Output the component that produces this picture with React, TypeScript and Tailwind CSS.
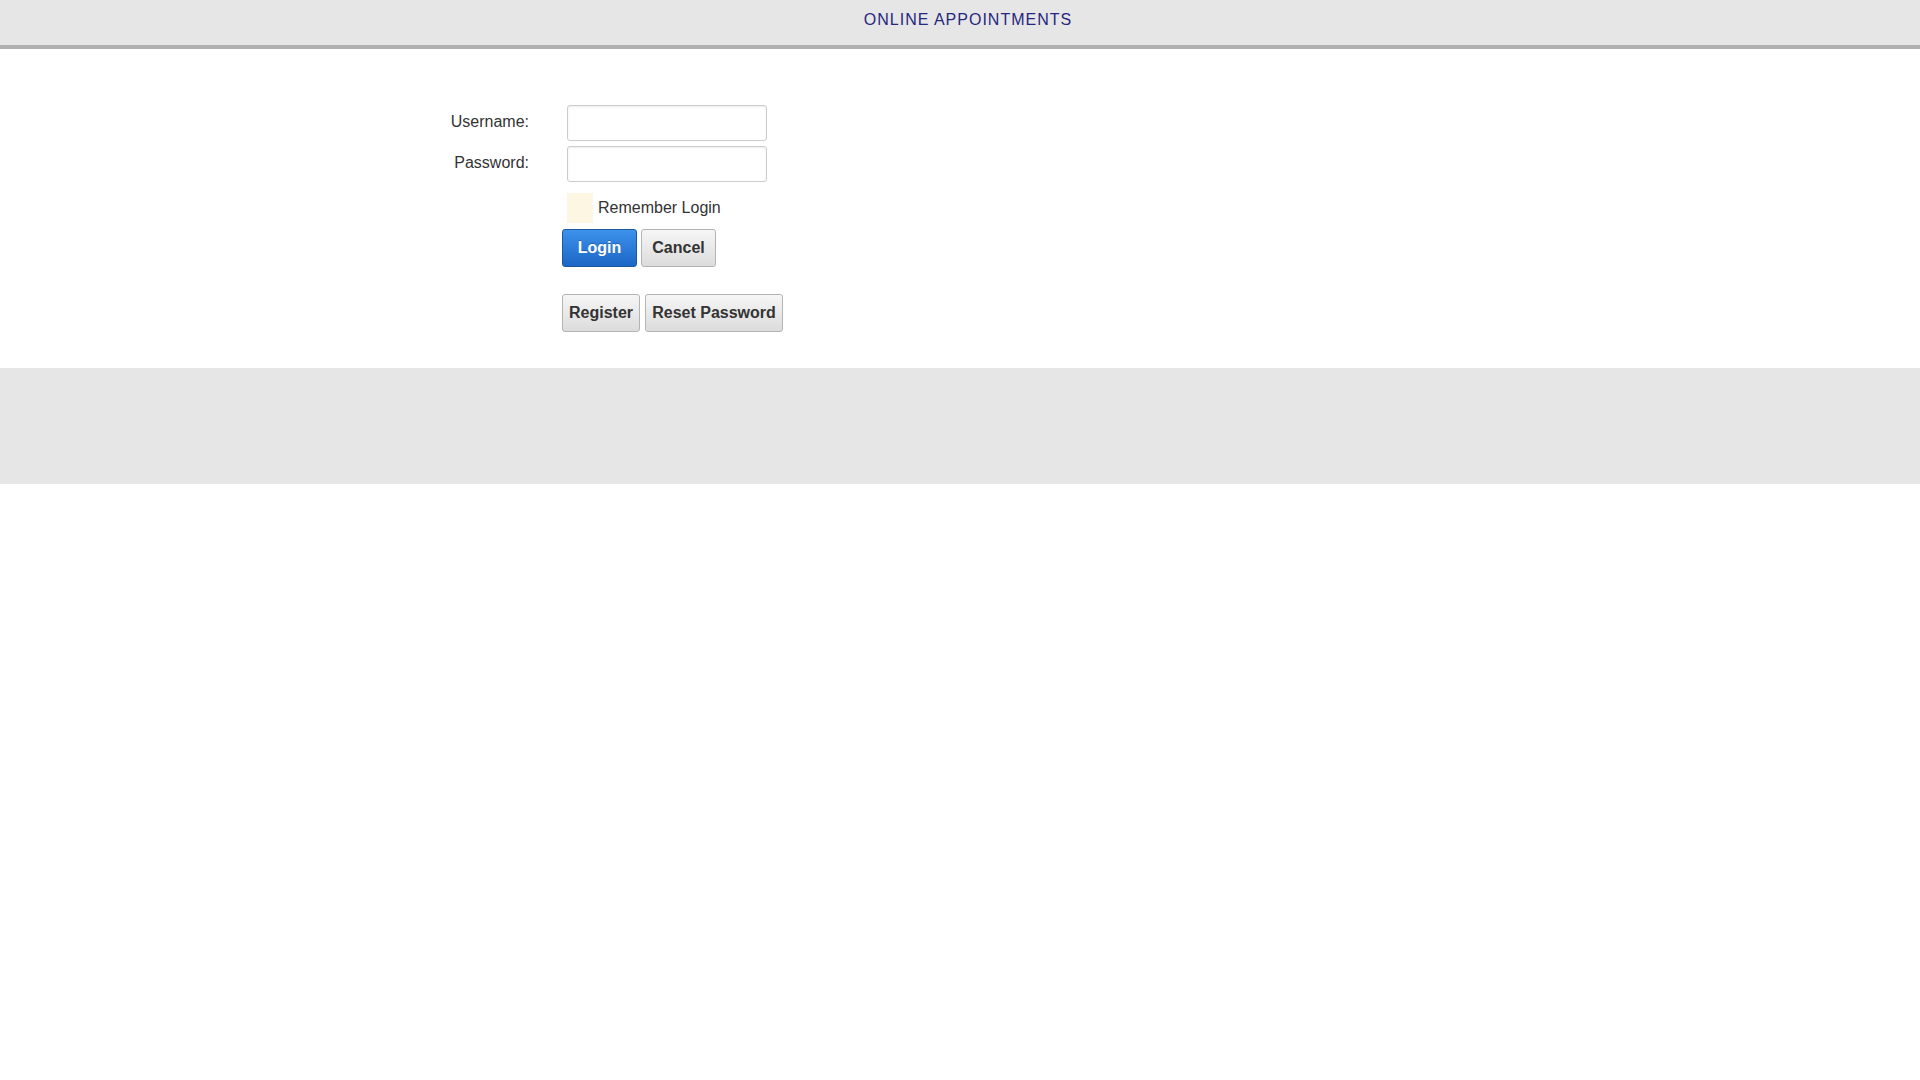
export default function App() {
  return (
    <div className="min-h-screen bg-white font-['Liberation_Sans',Arial,sans-serif] text-[16px] text-[#333]">
      <header className="h-[49px] bg-[#e6e6e6] border-b-4 border-[#b0b0b0] flex items-start justify-center pt-[12px] pl-4">
        <h1 className="text-[16px] font-normal tracking-[1px] text-[#27277f] leading-none">ONLINE APPOINTMENTS</h1>
      </header>

      <main className="pt-[56px] pb-[36px]">
        <form className="ml-[409px] flex flex-col" onSubmit={(e) => e.preventDefault()}>
          <div className="flex items-center h-[36px]">
            <label className="w-[120px] text-right -mt-[2px]">Username:</label>
            <input
              type="text"
              className="ml-[38px] w-[200px] h-[36px] rounded-[3px] border border-[#cccccc] bg-white shadow-[inset_0_1px_2px_rgba(0,0,0,0.08)] px-2 outline-none"
            />
          </div>
          <div className="flex items-center h-[36px] mt-[5px]">
            <label className="w-[120px] text-right -mt-[2px]">Password:</label>
            <input
              type="password"
              className="ml-[38px] w-[200px] h-[36px] rounded-[3px] border border-[#cccccc] bg-white shadow-[inset_0_1px_2px_rgba(0,0,0,0.08)] px-2 outline-none"
            />
          </div>
          <div className="flex items-center h-[30px] mt-[11px] ml-[158px]">
            <span className="w-[26px] h-[30px] bg-[#fdf6e3]" />
            <span className="ml-[5px]">Remember Login</span>
          </div>
          <div className="flex mt-[6px] ml-[153px] gap-[4px]">
            <button
              type="submit"
              className="w-[75px] h-[38px] rounded-[3px] border border-[#1b56a3] bg-gradient-to-b from-[#3d92ea] to-[#1c66c6] text-white font-bold [text-shadow:0_-1px_0_rgba(0,0,0,0.25)]"
            >
              Login
            </button>
            <button
              type="button"
              className="w-[75px] h-[38px] rounded-[3px] border border-[#b3b3b3] bg-gradient-to-b from-[#f6f6f6] to-[#dcdcdc] text-[#333] font-bold"
            >
              Cancel
            </button>
          </div>
          <div className="flex mt-[27px] ml-[153px] gap-[5px]">
            <button
              type="button"
              className="w-[78px] h-[38px] rounded-[3px] border border-[#b3b3b3] bg-gradient-to-b from-[#f6f6f6] to-[#dcdcdc] text-[#333] font-bold"
            >
              Register
            </button>
            <button
              type="button"
              className="w-[138px] h-[38px] rounded-[3px] border border-[#b3b3b3] bg-gradient-to-b from-[#f6f6f6] to-[#dcdcdc] text-[#333] font-bold"
            >
              Reset Password
            </button>
          </div>
        </form>
      </main>

      <footer className="h-[116px] bg-[#e6e6e6]" />
    </div>
  );
}
